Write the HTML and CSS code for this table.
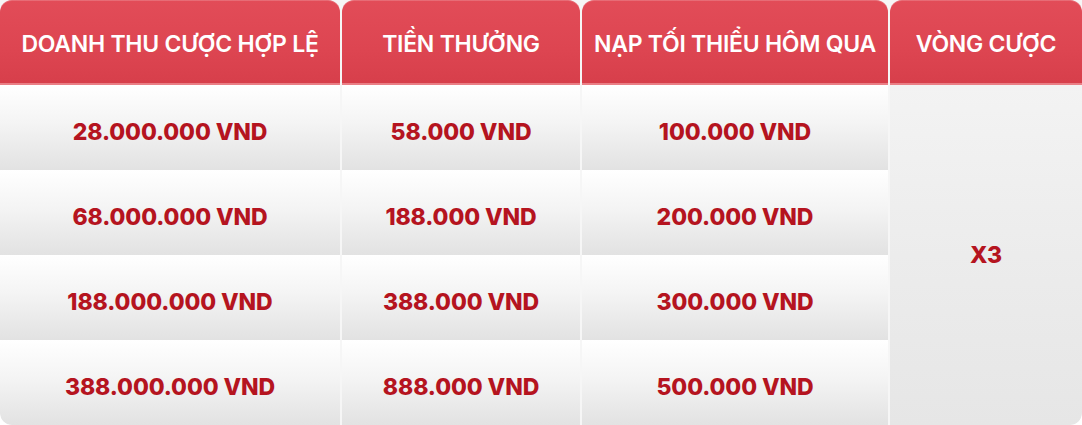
FILE: index.html
```html
<!DOCTYPE html>
<html lang="vi">
<head>
<meta charset="utf-8">
<title>Bảng thưởng</title>
<link rel="stylesheet" href="styles.css">
</head>
<body>
<div class="table">
  <div class="th">DOANH THU CƯỢC HỢP LỆ</div>
  <div class="th">TIỀN THƯỞNG</div>
  <div class="th">NẠP TỐI THIỂU HÔM QUA</div>
  <div class="th">VÒNG CƯỢC</div>

  <div class="td">28.000.000 VND</div>
  <div class="td">58.000 VND</div>
  <div class="td">100.000 VND</div>
  <div class="td merged">X3</div>

  <div class="td">68.000.000 VND</div>
  <div class="td">188.000 VND</div>
  <div class="td">200.000 VND</div>

  <div class="td">188.000.000 VND</div>
  <div class="td">388.000 VND</div>
  <div class="td">300.000 VND</div>

  <div class="td first-last">388.000.000 VND</div>
  <div class="td">888.000 VND</div>
  <div class="td">500.000 VND</div>
</div>
</body>
</html>
```

FILE: styles.css
```css
html, body {
  margin: 0;
  padding: 0;
  background: #ffffff;
}

.table {
  width: 1082px;
  height: 425px;
  display: grid;
  grid-template-columns: 340px 238px 306px 192px;
  grid-template-rows: 85px 85px 85px 85px 85px;
  column-gap: 2px;
  background: #f6f6f6;
  border-radius: 0 0 12px 12px;
  overflow: hidden;
  font-family: "Inter", "Liberation Sans", sans-serif;
}

.th {
  display: flex;
  align-items: center;
  justify-content: center;
  padding-top: 4px;
  box-sizing: border-box;
  background: linear-gradient(180deg, #e24c58 0%, #dd4551 60%, #d73f4b 100%);
  border-bottom: 2px solid #ea7f86;
  border-radius: 12px 12px 0 0;
  color: #ffffff;
  font-size: 23px;
  font-weight: 600;
  letter-spacing: -0.25px;
  box-shadow: inset 0 1px 0 rgba(255, 255, 255, 0.18);
}

.td {
  display: flex;
  align-items: center;
  justify-content: center;
  padding-top: 8px;
  box-sizing: border-box;
  background: linear-gradient(180deg, #ffffff 0%, #f4f4f4 45%, #e2e2e2 100%);
  color: #b5141f;
  font-size: 23px;
  font-weight: 800;
  letter-spacing: -0.1px;
}

.merged {
  grid-column: 4;
  grid-row: 2 / span 4;
  padding-top: 0;
  background: linear-gradient(180deg, #f3f3f3 0%, #ececec 50%, #e6e6e6 100%);
  border-radius: 0 0 12px 0;
}

.first-last {
  border-radius: 0 0 0 12px;
}
```
